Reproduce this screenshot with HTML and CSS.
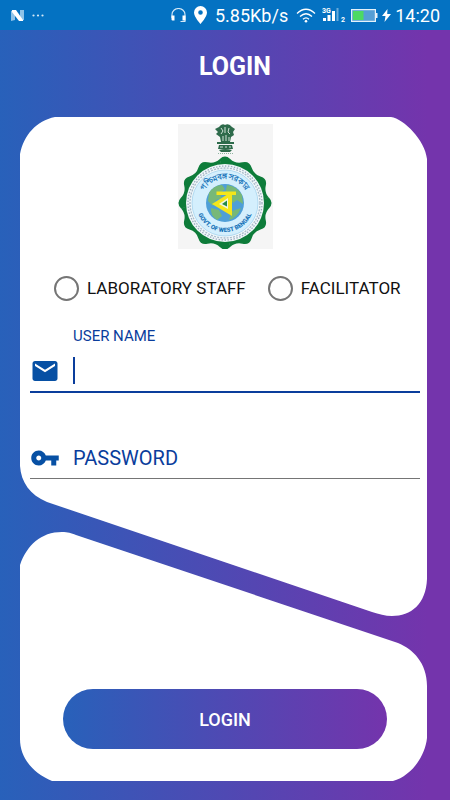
FILE: index.html
```html
<!DOCTYPE html>
<html lang="en">
<head>
    <meta charset="UTF-8">
    <meta name="viewport" content="width=device-width, initial-scale=1.0">
    <title>Login</title>
    <link rel="stylesheet" href="styles.css">
</head>
<body>
    <div class="status-bar">
        <svg class="icon-n" width="13" height="11" viewBox="0 0 13 11">
            <path d="M0 1L4 0V10L0 11ZM9 0L13 0V10L9 11Z" fill="#8fc3e8"/>
            <path d="M1 0H5L12 10V11H8L1 2Z" fill="#fff"/>
        </svg>
        <svg class="dots" width="12" height="3" viewBox="0 0 12 3" fill="#d5e9f7">
            <circle cx="1.5" cy="1.5" r="1.1"/><circle cx="6" cy="1.5" r="1.1"/><circle cx="10.5" cy="1.5" r="1.1"/>
        </svg>
        <div class="status-right">
            <svg width="15" height="15" viewBox="0 0 15 15">
                <path d="M1 10V6.500A6.500 6 0 0 1 14 6.500V13.500H9.500" fill="none" stroke="#d5e9f7" stroke-width="1.100"/>
                <path d="M.5 7.500H3.500V12.500H1.500Q.5 12.500.5 11.500ZM11.500 7.500H14.500V12.500H11.500Z" fill="#fff"/>
            </svg>
            <svg class="pin" width="13" height="18" viewBox="0 0 13 18">
                <path d="M6.500 0A6.500 6.500 0 0 0 0 6.500C0 11 6.500 18 6.500 18S13 11 13 6.500A6.500 6.500 0 0 0 6.500 0ZM6.500 4.200A2.300 2.300 0 1 1 6.500 8.800A2.300 2.300 0 1 1 6.500 4.200Z" fill="#fff" fill-rule="evenodd"/>
            </svg>
            <span class="speed">5.85Kb/s</span>
            <svg class="wifi" width="20" height="15" viewBox="0 0 20 15" fill="none" stroke="#fff" stroke-width="1.300">
                <path d="M1 5.500Q10-3 19 5.500M4 8.500Q10 3 16 8.500M7 11.200Q10 8.500 13 11.200"/>
                <circle cx="10" cy="13.200" r="1.300" fill="#fff" stroke="none"/>
            </svg>
            <svg class="signal" width="24" height="16" viewBox="0 0 24 16">
                <text x="0" y="6" class="signal-text">3G</text>
                <path d="M1 11H4V14H1ZM5.500 8H8.500V14H5.500ZM10 4H13V14H10Z" fill="#fff"/>
                <path d="M14.500 1H16.500V14H14.500Z" fill="#68aadb"/>
                <text x="19" y="15" class="signal-text">2</text>
            </svg>
            <svg class="battery" width="27" height="13" viewBox="0 0 27 13">
                <rect x=".6" y=".6" width="23.800" height="11.800" fill="#559fd6" stroke="#e4f1fa" stroke-width="1.200"/>
                <rect x="2" y="2" width="10.500" height="9" fill="#4cd964"/>
                <path d="M25 4H26.500V9H25Z" fill="#e4f1fa"/>
            </svg>
            <svg class="bolt" width="9" height="13" viewBox="0 0 9 13">
                <path d="M5.500 0L0 7H3.500L2.500 13L9 5H5.200Z" fill="#fff"/>
            </svg>
            <span class="clock">14:20</span>
        </div>
    </div>

    <h1 class="title">LOGIN</h1>

    <main class="panel">
        <svg class="panel-shape" viewBox="0 0 407 664" preserveAspectRatio="none">
            <path d="M0 37C4 18 16 4 35 0H371C384 2 405 23 407 42V462C406 487 391 499 372 499C365 499 359 497 352 495L27 385C10 378 1 365 0 349Z"/>
            <path d="M0 448C7 428 21 415 42 415C48 415 51 416 56 418L378 526C393 532 407 546 407 569V621C405 640 391 659 373 664H32C13 656 0 641 0 622Z"/>
        </svg>

        <form class="login-form">
            <svg class="emblem" width="95" height="125" viewBox="0 0 95 125">
                <defs>
                    <path id="arcTop" d="M23 79A24 24 0 0 1 71 79"/>
                    <path id="arcBottom" d="M18 79A29 29 0 0 0 76 79"/>
                    <path id="scallop" d="M0 0L44.100-5.200Q49 0 44.100 5.200Q39.100 10.500 40.800 17.500Q42.400 24.500 35.500 26.600Q28.600 28.600 26.600 35.500Q24.500 42.400 17.500 40.800Q10.500 39.100 5.200 44.100Z"/>
                </defs>
                <rect width="95" height="125" fill="#f5f5f5"/>
                <!-- lion capital -->
                <g fill="#2e6b4b">
                    <path d="M41 3Q44-1 47 1Q51-1 54 3L57 5L55 8L56 11L53 13L52 18H43L42 13L38 10L40 8L37 5Z"/>
                    <path d="M39 18H56V20H39ZM41 21H54L55 25H40ZM41 26Q47 24 54 26L52 28H43Z"/>
                </g>
                <path d="M43 4L45 7L43 10M47 3V9M51 4L50 8L52 10M45 12V17M48 11V17M51 13V17M42 23H45M47 23H49M51 23H53" stroke="#d3e3da" stroke-width="1" fill="none"/>
                <path d="M40 29.500H55" stroke="#8eb5a0" stroke-width="1" stroke-dasharray="1 1"/>
                <!-- scalloped seal -->
                <g transform="translate(47 79)" fill="#0e7c3a">
                    <use href="#scallop"/>
                    <use href="#scallop" transform="rotate(90)"/>
                    <use href="#scallop" transform="rotate(180)"/>
                    <use href="#scallop" transform="rotate(270)"/>
                    <circle r="41"/>
                </g>
                <circle cx="47" cy="79" r="39" fill="#f1f7fa"/>
                <circle cx="47" cy="79" r="37" fill="none" stroke="#9dadc0" stroke-width="1.300" stroke-dasharray="1.500 1.500"/>
                <circle cx="47" cy="79" r="35" fill="none" stroke="#a9bccb" stroke-width="1.300" stroke-dasharray="2 1.200"/>
                <circle cx="47" cy="79" r="33" fill="#d4effd" stroke="#a5d3ee" stroke-width=".8"/>
                <circle cx="47" cy="79" r="19" fill="#4e9fd7"/>
                <path d="M31 69Q36 61 44 61L47 65L42 69L44 74L38 76L35 82L30 77ZM49 61Q59 62 64 71L65 80L59 76L55 79L47 70ZM33 84L41 86L44 92L39 96Q32 91 33 84ZM54 87L63 84Q59 94 51 96Z" fill="#77b878"/>
                <path d="M38.500 67.500H58V71H38.500Z" fill="#f4e61b"/>
                <path d="M34 80L50 70H54V92Z" fill="#f4e61b"/>
                <path d="M41 80L50 74V85Z" fill="#eef5e0"/>
                <path d="M44 80L49 76.500V82.500Z" fill="#23884a"/>
                <text class="seal-text seal-bengali" lang="bn"><textPath href="#arcTop" startOffset="50%" text-anchor="middle">পশ্চিমবঙ্গ সরকার</textPath></text>
                <text class="seal-text"><textPath href="#arcBottom" startOffset="50%" text-anchor="middle">GOVT. OF WEST BENGAL</textPath></text>
            </svg>

            <div class="roles">
                <label class="role"><input type="radio" name="role" value="lab">LABORATORY STAFF</label>
                <label class="role"><input type="radio" name="role" value="facilitator">FACILITATOR</label>
            </div>

            <label class="float-label" for="username">USER NAME</label>
            <div class="field field-active">
                <svg class="field-icon" width="30" height="30" viewBox="0 0 24 24">
                    <path d="M20 4H4c-1.100 0-2 .9-2 2v12c0 1.100.9 2 2 2h16c1.100 0 2-.9 2-2V6c0-1.100-.9-2-2-2zm0 4l-8 5-8-5V6l8 5 8-5v2z"/>
                </svg>
                <span class="caret"></span>
                <input type="text" id="username" name="username">
            </div>

            <div class="field">
                <svg class="field-icon" width="30" height="30" viewBox="0 0 24 24">
                    <path d="M12.650 10C11.830 7.670 9.610 6 7 6c-3.310 0-6 2.690-6 6s2.690 6 6 6c2.610 0 4.830-1.670 5.650-4H17v4h4v-4h2v-4H12.650zM7 14c-1.100 0-2-.9-2-2s.9-2 2-2 2 .9 2 2-.9 2-2 2z"/>
                </svg>
                <label for="password">PASSWORD</label>
                <input type="password" id="password" name="password">
            </div>

            <button class="login-btn" type="submit">LOGIN</button>
        </form>
    </main>
</body>
</html>
```
FILE: styles.css
```css
* {
    box-sizing: border-box;
}
body {
    font-family: Roboto, sans-serif;
    background: linear-gradient(90deg, #2861ba, #4f49b3 50%, #7434ac 95%);
    margin: 0;
    min-height: 100vh;
    display: flex;
    flex-direction: column;
}
.status-bar {
    height: 30px;
    background: #0472c2;
    color: white;
    display: flex;
    align-items: center;
    padding: 0 10px 0 11px;
}
.dots {
    margin-left: 8px;
}
.status-right {
    display: flex;
    align-items: center;
    margin-left: auto;
}
.pin {
    margin: 0 8px;
}
.speed {
    font-size: 18px;
}
.wifi {
    margin: 0 6px 0 8px;
}
.signal-text {
    font-size: 7px;
    font-weight: bold;
    fill: white;
}
.battery {
    margin: 0 4px 0 5px;
}
.bolt {
    margin-right: 4px;
}
.clock {
    font-size: 18px;
}
.title {
    color: white;
    font-size: 25px;
    line-height: 30px;
    text-align: center;
    margin: 0;
    padding: 22px 0 35px 20px;
}
.panel {
    flex: 1;
    display: grid;
    grid-template-columns: minmax(0, 1fr);
    margin: 0 23px 19px 20px;
}
.panel-shape,
.login-form {
    grid-area: 1 / 1;
}
.panel-shape {
    width: 100%;
    height: 100%;
    min-height: 0;
    fill: white;
    contain: size;
}
.login-form {
    display: flex;
    flex-direction: column;
    padding: 7px 7px 32px 10px;
}
.emblem {
    align-self: center;
}
.roles {
    display: flex;
    gap: 22px;
    padding: 27px 0 25px 24px;
}
.role {
    display: flex;
    align-items: center;
    gap: 8px;
    color: #111;
    font-size: 17px;
    line-height: 25px;
    white-space: nowrap;
}
.role input {
    appearance: none;
    width: 25px;
    height: 25px;
    margin: 0;
    border: 2px solid #757575;
    border-radius: 50%;
}
.role input:checked {
    border: 8px solid #0750a4;
}
.float-label {
    color: #0a3d9c;
    font-size: 15px;
    line-height: 20px;
    padding-left: 43px;
}
.field {
    display: flex;
    align-items: center;
    height: 41px;
    border-bottom: 1px solid #757575;
    margin-top: 45px;
    color: #0a3d9c;
    font-size: 20px;
}
.field-active {
    height: 43px;
    border-bottom: 2px solid #0a3d9c;
    margin-top: 4px;
}
.field-icon {
    fill: #0750a4;
    margin-right: 13px;
}
.field input {
    flex: 1;
    min-width: 0;
    border: none;
    outline: none;
    background: none;
    color: #0a3d9c;
    font: inherit;
}
.caret {
    width: 2px;
    height: 27px;
    background: #0a3d9c;
}
.login-btn {
    height: 60px;
    margin: auto 33px 0;
    border: none;
    border-radius: 30px;
    background: linear-gradient(90deg, #2861ba, #4f49b3 50%, #7434ac);
    color: white;
    font-family: inherit;
    font-size: 18px;
    font-weight: 500;
    cursor: pointer;
}
.seal-text {
    font-family: Roboto, sans-serif;
    font-size: 6px;
    font-weight: 900;
    fill: #1673b9;
}
.seal-bengali {
    font-size: 8px;
}
```
